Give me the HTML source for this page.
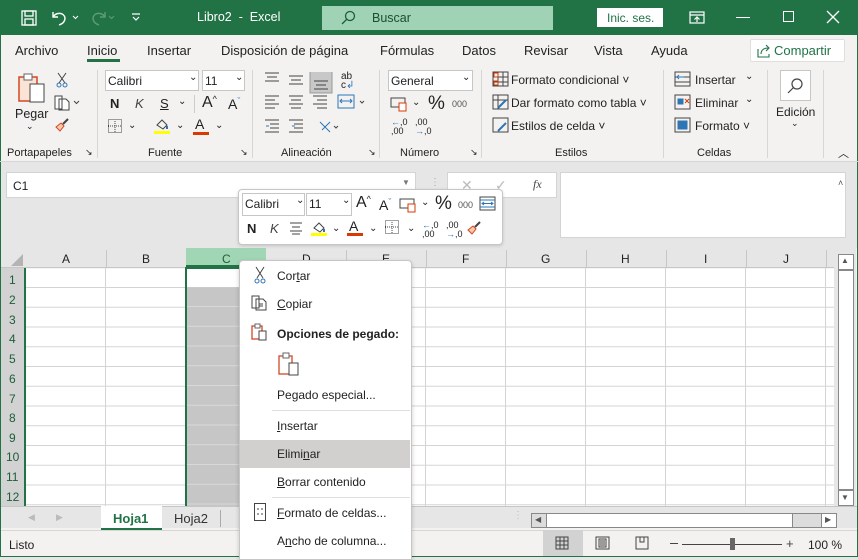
<!DOCTYPE html>
<html><head><meta charset="utf-8"><style>
*{margin:0;padding:0;box-sizing:border-box}
body{width:858px;height:557px;overflow:hidden;font-family:"Liberation Sans",sans-serif;font-size:12px;color:#222;background:#e6e6e6;position:relative}
.a{position:absolute}
.t{position:absolute;white-space:nowrap}
.ico{position:absolute}
</style></head><body>
<!-- title bar -->
<div class="a" style="left:0;top:0;width:858px;height:35px;background:#217346"></div>
<svg class="ico" style="left:20px;top:9px" width="18" height="18" viewBox="0 0 18 18" fill="none" stroke="#fff" stroke-width="1.3"><rect x="2" y="2" width="14" height="14"/><rect x="5" y="2" width="8" height="5"/><rect x="5" y="10" width="8" height="6"/></svg>
<svg class="ico" style="left:50px;top:9px" width="30" height="18" viewBox="0 0 30 18" fill="none" stroke="#fff" stroke-width="1.4"><path d="M3 3v5h5"/><path d="M3 8c3-5 11-5 12 1 0 4-3 6-6 7"/><path d="M23 7l2.5 2.5L28 7" stroke-width="1"/></svg>
<svg class="ico" style="left:90px;top:9px" width="30" height="18" viewBox="0 0 30 18" fill="none" stroke="#5e9c77" stroke-width="1.4"><path d="M15 3v5h-5"/><path d="M15 8c-3-5-11-5-12 1 0 4 3 6 6 7"/><path d="M19 7l2.5 2.5L24 7" stroke-width="1"/></svg>
<svg class="ico" style="left:131px;top:12px" width="10" height="10" viewBox="0 0 10 10" fill="none" stroke="#fff" stroke-width="1.2"><path d="M1 2h8M2 5l3 3 3-3"/></svg>
<div class="t" style="left:197px;top:10px;color:#fff;font-size:12.5px">Libro2 &nbsp;-&nbsp; Excel</div>
<div class="a" style="left:322px;top:6px;width:231px;height:24px;background:#a0d3b5"></div>
<svg class="ico" style="left:340px;top:10px" width="16" height="16" viewBox="0 0 16 16" fill="none" stroke="#1b5e3a" stroke-width="1.3"><circle cx="10" cy="6" r="4.5"/><path d="M7 9l-5 5"/></svg>
<div class="t" style="left:372px;top:11px;color:#1b4d33;font-size:12.5px">Buscar</div>
<div class="a" style="left:597px;top:8px;width:66px;height:19px;background:#fff"></div>
<div class="t" style="left:607px;top:11px;color:#217346;font-size:12px">Inic. ses.</div>
<svg class="ico" style="left:689px;top:11px" width="16" height="14" viewBox="0 0 16 14" fill="none" stroke="#fff" stroke-width="1.2"><rect x="1" y="1" width="14" height="11"/><path d="M1 4h14M8 11V6M5.5 8.5L8 6l2.5 2.5"/></svg>
<div class="a" style="left:736px;top:17px;width:14px;height:1px;background:#fff"></div>
<div class="a" style="left:783px;top:11px;width:11px;height:11px;border:1.2px solid #fff"></div>
<svg class="ico" style="left:826px;top:10px" width="14" height="14" viewBox="0 0 14 14" stroke="#fff" stroke-width="1.3"><path d="M1 1l12 12M13 1L1 13"/></svg>
<!-- window frame -->
<div class="a" style="left:0;top:35px;width:858px;height:522px;background:#f3f2f1;border-left:1px solid #217346;border-right:1px solid #217346;border-bottom:1px solid #217346"></div>
<!-- tabs -->
<div class="t" style="left:15px;top:43px;font-size:13px">Archivo</div>
<div class="t" style="left:87px;top:43px;font-size:13px">Inicio</div>
<div class="a" style="left:87px;top:59px;width:33px;height:3px;background:#217346"></div>
<div class="t" style="left:147px;top:43px;font-size:13px">Insertar</div>
<div class="t" style="left:221px;top:43px;font-size:13px">Disposición de página</div>
<div class="t" style="left:380px;top:43px;font-size:13px">Fórmulas</div>
<div class="t" style="left:462px;top:43px;font-size:13px">Datos</div>
<div class="t" style="left:524px;top:43px;font-size:13px">Revisar</div>
<div class="t" style="left:594px;top:43px;font-size:13px">Vista</div>
<div class="t" style="left:651px;top:43px;font-size:13px">Ayuda</div>
<div class="a" style="left:750px;top:39px;width:95px;height:23px;background:#fff;border:1px solid #e1dfdd;border-radius:2px"></div>
<svg class="ico" style="left:757px;top:44px" width="14" height="14" viewBox="0 0 14 14" fill="none" stroke="#217346" stroke-width="1.1"><path d="M1 5v8h11v-3"/><path d="M4 10c0-4 3-6 7-6M9 1l3 3-3 3"/></svg>
<div class="t" style="left:774px;top:43px;font-size:13px;color:#217346">Compartir</div>
<!-- ribbon separators -->
<div class="a" style="left:97px;top:70px;width:1px;height:88px;background:#d6d6d6"></div>
<div class="a" style="left:252px;top:70px;width:1px;height:88px;background:#d6d6d6"></div>
<div class="a" style="left:379px;top:70px;width:1px;height:88px;background:#d6d6d6"></div>
<div class="a" style="left:481px;top:70px;width:1px;height:88px;background:#d6d6d6"></div>
<div class="a" style="left:663px;top:70px;width:1px;height:88px;background:#d6d6d6"></div>
<div class="a" style="left:767px;top:70px;width:1px;height:88px;background:#d6d6d6"></div>
<div class="a" style="left:823px;top:70px;width:1px;height:88px;background:#d6d6d6"></div>
<div class="a" style="left:0;top:161px;width:858px;height:1px;background:#d6d6d6"></div>
<!-- portapapeles -->
<svg class="ico" style="left:17px;top:72px" width="30" height="32" viewBox="0 0 30 32" fill="none"><rect x="2" y="5" width="18" height="24" stroke="#d24726" stroke-width="1.5" fill="#fbe3d6"/><rect x="7" y="2" width="8" height="6" stroke="#666" fill="#fff"/><rect x="13" y="12" width="14" height="18" stroke="#444" fill="#fff"/></svg>
<div class="t" style="left:15px;top:107px;font-size:12.5px">Pegar</div>
<div class="t" style="left:26px;top:121px;font-size:9px">⌄</div>
<svg class="ico" style="left:55px;top:72px" width="14" height="16" viewBox="0 0 14 16" fill="none" stroke="#444"><path d="M3 1l7 10M11 1L4 11"/><circle cx="4" cy="13" r="2" stroke="#2e75b6"/><circle cx="10" cy="13" r="2" stroke="#2e75b6"/></svg>
<svg class="ico" style="left:54px;top:95px" width="26" height="16" viewBox="0 0 26 16" fill="none" stroke="#444"><path d="M1 1h7v13H1zM5 4h7l3 3v8H5z" fill="#fff"/><path d="M20 6l2.5 2.5L25 6"/></svg>
<svg class="ico" style="left:54px;top:117px" width="16" height="16" viewBox="0 0 16 16" fill="none"><path d="M9 7l5-5" stroke="#444" stroke-width="2"/><path d="M2 10l5-4 3 3-4 5z" fill="#f8c9a8" stroke="#d24726"/></svg>
<div class="t" style="left:7px;top:147px;font-size:11px">Portapapeles</div>
<div class="t" style="left:85px;top:147px;font-size:9px">↘</div>
<!-- fuente -->
<div class="a" style="left:105px;top:70px;width:94px;height:21px;background:#fff;border:1px solid #c8c6c4"></div>
<div class="t" style="left:108px;top:74px;font-size:12px">Calibri</div>
<div class="t" style="left:189px;top:72px;font-size:10px">⌄</div>
<div class="a" style="left:202px;top:70px;width:43px;height:21px;background:#fff;border:1px solid #c8c6c4"></div>
<div class="t" style="left:205px;top:74px;font-size:12px">11</div>
<div class="t" style="left:235px;top:72px;font-size:10px">⌄</div>
<div class="t" style="left:110px;top:96px;font-size:13px;font-weight:bold">N</div>
<div class="t" style="left:135px;top:96px;font-size:13px;font-style:italic;color:#444">K</div>
<div class="t" style="left:160px;top:96px;font-size:13px;text-decoration:underline">S</div>
<div class="t" style="left:178px;top:96px;font-size:10px">⌄</div>
<div class="a" style="left:194px;top:95px;width:1px;height:18px;background:#ccc"></div>
<div class="t" style="left:202px;top:94px;font-size:16px">A<span style="font-size:9px;vertical-align:top">^</span></div>
<div class="t" style="left:228px;top:96px;font-size:14px">A<span style="font-size:9px;vertical-align:top;color:#2e75b6">ˇ</span></div>
<svg class="ico" style="left:108px;top:119px" width="14" height="14" viewBox="0 0 14 14" fill="none" stroke="#444" stroke-dasharray="1 1"><rect x="0.5" y="0.5" width="13" height="13"/><path d="M7 0v14M0 7h14"/></svg>
<div class="t" style="left:128px;top:120px;font-size:10px">⌄</div>
<svg class="ico" style="left:154px;top:117px" width="16" height="17" viewBox="0 0 16 17" fill="none"><path d="M3 8l5-5 5 5-4 4z" stroke="#444"/><path d="M13 9v3" stroke="#2e75b6" stroke-width="2"/><rect x="0" y="14" width="16" height="3" fill="#ffff00"/></svg>
<div class="t" style="left:176px;top:120px;font-size:10px">⌄</div>
<div class="t" style="left:195px;top:116px;font-size:14px">A</div>
<div class="a" style="left:193px;top:132px;width:16px;height:3px;background:#d83b01"></div>
<div class="t" style="left:215px;top:120px;font-size:10px">⌄</div>
<div class="t" style="left:148px;top:147px;font-size:11px">Fuente</div>
<div class="t" style="left:240px;top:147px;font-size:9px">↘</div>
<!-- alineacion -->
<svg class="ico" style="left:264px;top:72px" width="110" height="64" viewBox="0 0 110 64" fill="none" stroke="#444"><path d="M1 1h14M3 5h10M1 9h14M25 4h14M27 8h10M25 12h14"/><rect x="46" y="-1" width="22" height="22" fill="#c8c8c8" stroke="#999"/><path d="M50 9h14M52 13h10M50 17h14"/><path d="M1 24h14M1 28h10M1 32h14M1 36h10M25 24h14M27 28h10M25 32h14M27 36h10M49 24h14M53 28h10M49 32h14M53 36h10"/><rect x="74" y="23" width="16" height="13" stroke="#2e75b6"/><path d="M77 29h10M78 27l-2 2 2 2M86 27l2 2-2 2" stroke="#2e75b6"/><path d="M96 29l2 2 2-2"/><path d="M1 48h14M6 52h9M6 56h9M1 60h14M25 48h14M30 52h9M30 56h9M25 60h14"/><path d="M2 54h3M28 54h3" stroke="#2e75b6"/><path d="M56 50l10 10M58 58l8-8" stroke="#2e75b6"/><path d="M70 54l2 2 2-2"/></svg>
<div class="t" style="left:341px;top:72px;font-size:10px;line-height:9px">ab<br>c<span style="color:#2e75b6">↲</span></div>
<div class="t" style="left:281px;top:147px;font-size:11px">Alineación</div>
<div class="t" style="left:368px;top:147px;font-size:9px">↘</div>
<!-- numero -->
<div class="a" style="left:388px;top:70px;width:85px;height:21px;background:#fff;border:1px solid #c8c6c4"></div>
<div class="t" style="left:391px;top:74px;font-size:12px">General</div>
<div class="t" style="left:462px;top:72px;font-size:10px">⌄</div>
<svg class="ico" style="left:390px;top:96px" width="20" height="16" viewBox="0 0 20 16" fill="none" stroke="#444"><rect x="1" y="2" width="14" height="9"/><rect x="9" y="7" width="7" height="8" stroke="#d83b01" fill="#fff"/></svg>
<div class="t" style="left:412px;top:97px;font-size:10px">⌄</div>
<div class="t" style="left:428px;top:93px;font-size:19px">%</div>
<div class="t" style="left:452px;top:99px;font-size:9px;color:#555">000</div>
<div class="t" style="left:391px;top:118px;font-size:9px;line-height:9px"><span style="color:#2e75b6">←</span>,0<br>,00</div>
<div class="t" style="left:415px;top:118px;font-size:9px;line-height:9px">,00<br><span style="color:#2e75b6">→</span>,0</div>
<div class="t" style="left:400px;top:147px;font-size:11px">Número</div>
<div class="t" style="left:470px;top:147px;font-size:9px">↘</div>
<!-- estilos -->
<svg class="ico" style="left:492px;top:71px" width="18" height="62" viewBox="0 0 18 62" fill="none" stroke="#444"><rect x="1" y="1" width="15" height="14"/><path d="M1 6h15M1 11h15M6 1v14M11 1v14"/><rect x="2" y="2" width="4" height="4" stroke="#d83b01"/><rect x="2" y="10" width="4" height="4" stroke="#d83b01"/><rect x="1" y="24" width="15" height="14"/><path d="M1 29h15M6 24v14"/><path d="M6 37l8-8" stroke="#2e75b6" stroke-width="2"/><rect x="1" y="47" width="15" height="14"/><path d="M6 60l8-8" stroke="#2e75b6" stroke-width="2"/></svg>
<div class="t" style="left:511px;top:73px;font-size:12px">Formato condicional ˅</div>
<div class="t" style="left:511px;top:96px;font-size:12px">Dar formato como tabla ˅</div>
<div class="t" style="left:511px;top:119px;font-size:12px">Estilos de celda ˅</div>
<div class="t" style="left:555px;top:147px;font-size:11px">Estilos</div>
<!-- celdas -->
<svg class="ico" style="left:674px;top:71px" width="18" height="62" viewBox="0 0 18 62" fill="none" stroke="#444"><rect x="1" y="1" width="15" height="14"/><path d="M1 6h15M1 11h15"/><path d="M3 6h7M5 4l-2 2 2 2" stroke="#2e75b6"/><rect x="1" y="24" width="15" height="14"/><rect x="4" y="28" width="5" height="5" fill="#2e75b6" stroke="#2e75b6"/><path d="M11 28l4 4M15 28l-4 4" stroke="#d83b01"/><rect x="1" y="47" width="15" height="14"/><rect x="4" y="50" width="9" height="8" fill="#2e75b6" stroke="#2e75b6"/></svg>
<div class="t" style="left:695px;top:73px;font-size:12px">Insertar</div><div class="t" style="left:745px;top:71px;font-size:10px">⌄</div>
<div class="t" style="left:695px;top:96px;font-size:12px">Eliminar</div><div class="t" style="left:745px;top:94px;font-size:10px">⌄</div>
<div class="t" style="left:695px;top:119px;font-size:12px">Formato ˅</div>
<div class="t" style="left:697px;top:147px;font-size:11px">Celdas</div>
<!-- edicion -->
<div class="a" style="left:780px;top:70px;width:31px;height:31px;background:#fff;border:1px solid #c8c6c4"></div>
<svg class="ico" style="left:787px;top:77px" width="17" height="17" viewBox="0 0 17 17" fill="none" stroke="#444" stroke-width="1.2"><circle cx="10" cy="7" r="5"/><path d="M6.5 10.5L1 16"/></svg>
<div class="t" style="left:776px;top:105px;font-size:12px">Edición</div>
<div class="t" style="left:791px;top:118px;font-size:9px">⌄</div>
<div class="t" style="left:838px;top:145px;font-size:11px">︿</div>
<!-- formula area -->
<div class="a" style="left:1px;top:162px;width:856px;height:86px;background:#e6e6e6"></div>
<div class="a" style="left:6px;top:172px;width:410px;height:26px;background:#fff;border:1px solid #d4d4d4"></div>
<div class="t" style="left:13px;top:179px;font-size:12px">C1</div>
<div class="t" style="left:402px;top:178px;font-size:8px;color:#777">▼</div>
<div class="t" style="left:430px;top:177px;font-size:10px;color:#aaa">⋮</div>
<div class="a" style="left:447px;top:172px;width:110px;height:26px;background:#fff;border:1px solid #d4d4d4"></div>
<div class="t" style="left:461px;top:177px;font-size:14px;color:#bbb">✕</div>
<div class="t" style="left:495px;top:177px;font-size:14px;color:#bbb">✓</div>
<div class="t" style="left:533px;top:177px;font-size:12px;font-style:italic;font-family:'Liberation Serif',serif;color:#444">fx</div>
<div class="a" style="left:560px;top:172px;width:286px;height:66px;background:#fff;border:1px solid #d4d4d4"></div>
<div class="t" style="left:838px;top:178px;font-size:9px;color:#555">˄</div>
<!-- grid -->
<div class="a" style="left:1px;top:248px;width:833px;height:20px;background:#e6e6e6;border-bottom:1px solid #c6c6c6"></div>
<svg class="ico" style="left:10px;top:253px" width="14" height="14"><path d="M13 1v12H1z" fill="#b4b4b4"/></svg>
<div class="a" style="left:1px;top:268px;width:25px;height:238px;background:#d2d2d2;border-right:2px solid #217346"></div>
<div class="a" style="left:26px;top:268px;width:808px;height:238px;background:#fff;
background-image:linear-gradient(to right,#d4d4d4 1px,transparent 1px),linear-gradient(to bottom,#d4d4d4 1px,transparent 1px);background-size:80px 100%,100% 19.75px;background-position:79px 0,0 19px"></div>
<div class="a" style="left:187px;top:287px;width:79px;height:219px;background:#c6c6c6;
background-image:linear-gradient(to bottom,#d8d8d8 1px,transparent 1px);background-size:100% 19.75px;background-position:0 19px"></div>
<div class="a" style="left:185px;top:267px;width:83px;height:240px;border:2px solid #217346;border-bottom:none"></div>
<div class="a" style="left:186px;top:248px;width:80px;height:19px;background:#a0d6b4;border-bottom:2px solid #217346"></div>
<div id="cols"></div>
<div class="t" style="left:62px;top:252px;font-size:12px">A</div>
<div class="t" style="left:142px;top:252px;font-size:12px">B</div>
<div class="t" style="left:222px;top:252px;font-size:12px;color:#1b5e3a">C</div>
<div class="t" style="left:302px;top:252px;font-size:12px">D</div>
<div class="t" style="left:382px;top:252px;font-size:12px">E</div>
<div class="t" style="left:462px;top:252px;font-size:12px">F</div>
<div class="t" style="left:541px;top:252px;font-size:12px">G</div>
<div class="t" style="left:621px;top:252px;font-size:12px">H</div>
<div class="t" style="left:704px;top:252px;font-size:12px">I</div>
<div class="t" style="left:783px;top:252px;font-size:12px">J</div>
<div class="a" style="left:106px;top:250px;width:1px;height:17px;background:#c6c6c6"></div>
<div class="a" style="left:346px;top:250px;width:1px;height:17px;background:#c6c6c6"></div>
<div class="a" style="left:426px;top:250px;width:1px;height:17px;background:#c6c6c6"></div>
<div class="a" style="left:506px;top:250px;width:1px;height:17px;background:#c6c6c6"></div>
<div class="a" style="left:586px;top:250px;width:1px;height:17px;background:#c6c6c6"></div>
<div class="a" style="left:666px;top:250px;width:1px;height:17px;background:#c6c6c6"></div>
<div class="a" style="left:746px;top:250px;width:1px;height:17px;background:#c6c6c6"></div>
<div class="a" style="left:826px;top:250px;width:1px;height:17px;background:#c6c6c6"></div>
<div class="t" style="left:9px;top:271px;font-size:12px;color:#1b5e3a;line-height:19.75px">1<br>2<br>3<br>4<br>5<br>6<br>7<br>8<br>9</div>
<div class="t" style="left:6px;top:448px;font-size:12px;color:#1b5e3a;line-height:19.75px">10<br>11<br>12</div>
<!-- vscroll -->
<div class="a" style="left:834px;top:248px;width:22px;height:258px;background:#e6e6e6"></div>
<div class="a" style="left:838px;top:254px;width:16px;height:16px;background:#fff;border:1px solid #888"></div>
<div class="t" style="left:841px;top:256px;font-size:8px;color:#555">▲</div>
<div class="a" style="left:838px;top:270px;width:16px;height:220px;background:#fff;border:1px solid #888"></div>
<div class="a" style="left:838px;top:490px;width:16px;height:16px;background:#fff;border:1px solid #888"></div>
<div class="t" style="left:841px;top:493px;font-size:8px;color:#555">▼</div>
<!-- sheet tabs -->
<div class="a" style="left:1px;top:506px;width:856px;height:22px;background:#e6e6e6;border-top:1px solid #c6c6c6"></div>
<div class="t" style="left:28px;top:512px;font-size:9px;color:#bbb">◀</div>
<div class="t" style="left:56px;top:512px;font-size:9px;color:#bbb">▶</div>
<div class="a" style="left:101px;top:506px;width:61px;height:24px;background:#fff;border-bottom:2px solid #217346"></div>
<div class="t" style="left:113px;top:511px;font-size:13px;font-weight:bold;color:#217346">Hoja1</div>
<div class="t" style="left:174px;top:511px;font-size:13px;color:#333">Hoja2</div>
<div class="a" style="left:220px;top:510px;width:1px;height:17px;background:#aaa"></div>
<div class="t" style="left:513px;top:510px;font-size:10px;color:#bbb">⋮</div>
<div class="a" style="left:531px;top:513px;width:306px;height:15px;background:#dcdcdc;border:1px solid #888"></div>
<div class="a" style="left:546px;top:514px;width:247px;height:13px;background:#fff;border-left:1px solid #888;border-right:1px solid #888"></div>
<div class="t" style="left:535px;top:515px;font-size:8px;color:#555">◀</div>
<div class="a" style="left:821px;top:514px;width:15px;height:13px;background:#fff;border-left:1px solid #888"></div>
<div class="t" style="left:825px;top:515px;font-size:8px;color:#555">▶</div>
<!-- status -->
<div class="a" style="left:1px;top:530px;width:856px;height:26px;background:#f3f2f1;border-top:1px solid #d6d6d6"></div>
<div class="t" style="left:9px;top:538px;font-size:12px">Listo</div>
<div class="a" style="left:543px;top:530px;width:40px;height:26px;background:#d2d2d2"></div>
<svg class="ico" style="left:555px;top:536px" width="110" height="15" viewBox="0 0 110 15" fill="none" stroke="#444"><rect x="1" y="1" width="12" height="12"/><path d="M5 1v12M9 1v12M1 5h12M1 9h12"/><rect x="41" y="1" width="13" height="12"/><rect x="44" y="3" width="7" height="8"/><path d="M45 5h5M45 7h5M45 9h5"/><path d="M81 13V1h12v12zM85 1v5h4V1"/></svg>
<div class="a" style="left:670px;top:543px;width:8px;height:1px;background:#444"></div>
<div class="a" style="left:682px;top:544px;width:100px;height:1px;background:#444"></div>
<div class="a" style="left:730px;top:538px;width:5px;height:12px;background:#666"></div>
<div class="t" style="left:786px;top:536px;font-size:13px;color:#444">+</div>
<div class="t" style="left:808px;top:538px;font-size:12px">100 %</div>
<!-- mini toolbar -->
<div class="a" style="left:238px;top:189px;width:265px;height:56px;background:#fff;border:1px solid #c8c6c4;border-radius:4px;box-shadow:0 1px 3px rgba(0,0,0,.15)"></div>
<div class="a" style="left:242px;top:193px;width:63px;height:23px;border:1px solid #c8c6c4"></div>
<div class="t" style="left:245px;top:197px;font-size:12px">Calibri</div>
<div class="t" style="left:296px;top:195px;font-size:10px">⌄</div>
<div class="a" style="left:306px;top:193px;width:46px;height:23px;border:1px solid #c8c6c4"></div>
<div class="t" style="left:309px;top:197px;font-size:12px">11</div>
<div class="t" style="left:342px;top:195px;font-size:10px">⌄</div>
<div class="t" style="left:356px;top:194px;font-size:16px">A<span style="font-size:9px;vertical-align:top">^</span></div>
<div class="t" style="left:379px;top:197px;font-size:14px">A<span style="font-size:9px;vertical-align:top;color:#2e75b6">ˇ</span></div>
<svg class="ico" style="left:399px;top:197px" width="20" height="16" viewBox="0 0 20 16" fill="none" stroke="#444"><rect x="1" y="2" width="14" height="9"/><rect x="9" y="7" width="7" height="8" stroke="#d83b01" fill="#fff"/></svg>
<div class="t" style="left:421px;top:197px;font-size:10px">⌄</div>
<div class="t" style="left:435px;top:193px;font-size:19px">%</div>
<div class="t" style="left:458px;top:200px;font-size:9px;color:#555">000</div>
<svg class="ico" style="left:479px;top:196px" width="17" height="15" viewBox="0 0 17 15" fill="none" stroke="#2e75b6"><rect x="1" y="1" width="15" height="13" stroke="#444"/><path d="M1 4h15M1 11h15M4 7.5h9M5 6l-2 1.5 2 1.5M12 6l2 1.5-2 1.5"/></svg>
<div class="t" style="left:247px;top:221px;font-size:13px;font-weight:bold">N</div>
<div class="t" style="left:270px;top:221px;font-size:13px;font-style:italic;color:#444">K</div>
<svg class="ico" style="left:289px;top:222px" width="14" height="13" viewBox="0 0 14 13" stroke="#444"><path d="M1 1h12M3 5h8M1 9h12M3 12h8"/></svg>
<svg class="ico" style="left:311px;top:220px" width="16" height="17" viewBox="0 0 16 17" fill="none"><path d="M3 8l5-5 5 5-4 4z" stroke="#444"/><path d="M13 9v3" stroke="#2e75b6" stroke-width="2"/><rect x="0" y="13" width="16" height="3" fill="#ffff00"/></svg>
<div class="t" style="left:332px;top:223px;font-size:10px">⌄</div>
<div class="t" style="left:349px;top:218px;font-size:14px">A</div>
<div class="a" style="left:347px;top:233px;width:16px;height:3px;background:#d83b01"></div>
<div class="t" style="left:369px;top:223px;font-size:10px">⌄</div>
<svg class="ico" style="left:385px;top:220px" width="14" height="14" viewBox="0 0 14 14" fill="none" stroke="#444" stroke-dasharray="1 1"><rect x="0.5" y="0.5" width="13" height="13"/><path d="M7 0v14M0 7h14"/></svg>
<div class="t" style="left:407px;top:223px;font-size:10px">⌄</div>
<div class="t" style="left:422px;top:221px;font-size:9px;line-height:9px"><span style="color:#2e75b6">←</span>,0<br>,00</div>
<div class="t" style="left:446px;top:221px;font-size:9px;line-height:9px">,00<br><span style="color:#2e75b6">→</span>,0</div>
<svg class="ico" style="left:466px;top:220px" width="16" height="16" viewBox="0 0 16 16" fill="none"><path d="M9 7l5-5" stroke="#444" stroke-width="2"/><path d="M2 10l5-4 3 3-4 5z" fill="#f8c9a8" stroke="#d24726"/></svg>
<!-- context menu -->
<div class="a" style="left:239px;top:260px;width:173px;height:300px;background:#fff;border:1px solid #c8c6c4;border-radius:4px 4px 0 0;box-shadow:0 2px 5px rgba(0,0,0,.2)"></div>
<svg class="ico" style="left:254px;top:266px" width="12" height="18" viewBox="0 0 12 18" fill="none" stroke="#444"><path d="M2 1l7 11M10 1L3 12"/><circle cx="3" cy="15" r="2" stroke="#2e75b6"/><circle cx="9" cy="15" r="2" stroke="#2e75b6"/></svg>
<div class="t" style="left:277px;top:269px;font-size:12px">Cor<u>t</u>ar</div>
<svg class="ico" style="left:251px;top:295px" width="16" height="16" viewBox="0 0 16 16" fill="none" stroke="#444"><path d="M1 1h7v12H1zM5 4h7l3 3v8H5z" fill="#fff"/><path d="M8 9h4M8 11h4"/></svg>
<div class="t" style="left:277px;top:297px;font-size:12px"><u>C</u>opiar</div>
<svg class="ico" style="left:251px;top:323px" width="16" height="18" viewBox="0 0 16 18" fill="none"><rect x="1" y="3" width="10" height="13" stroke="#d24726" stroke-width="1.3"/><rect x="4" y="1" width="5" height="4" stroke="#666" fill="#fff"/><rect x="8" y="8" width="7" height="9" stroke="#444" fill="#fff"/></svg>
<div class="t" style="left:277px;top:327px;font-size:12px;font-weight:bold">Opciones de pegado:</div>
<svg class="ico" style="left:278px;top:352px" width="22" height="24" viewBox="0 0 22 24" fill="none"><rect x="1" y="4" width="13" height="18" stroke="#d24726" stroke-width="1.3"/><rect x="5" y="1" width="6" height="5" stroke="#666" fill="#fff"/><rect x="11" y="11" width="9" height="12" stroke="#444" fill="#fff"/></svg>
<div class="t" style="left:277px;top:388px;font-size:12px">Pe<u>g</u>ado especial...</div>
<div class="a" style="left:272px;top:410px;width:138px;height:1px;background:#e1dfdd"></div>
<div class="t" style="left:277px;top:419px;font-size:12px"><u>I</u>nsertar</div>
<div class="a" style="left:240px;top:440px;width:170px;height:28px;background:#d2d0ce"></div>
<div class="t" style="left:277px;top:447px;font-size:12px">Elimi<u>n</u>ar</div>
<div class="t" style="left:277px;top:475px;font-size:12px"><u>B</u>orrar contenido</div>
<div class="a" style="left:272px;top:497px;width:138px;height:1px;background:#e1dfdd"></div>
<svg class="ico" style="left:254px;top:503px" width="12" height="18" viewBox="0 0 12 18" fill="none" stroke="#444"><rect x="0.5" y="0.5" width="11" height="17"/><path d="M3 6h2M7 6h2M3 11h2M7 11h2"/></svg>
<div class="t" style="left:277px;top:506px;font-size:12px"><u>F</u>ormato de celdas...</div>
<div class="t" style="left:277px;top:534px;font-size:12px">A<u>n</u>cho de columna...</div>
</body></html>
